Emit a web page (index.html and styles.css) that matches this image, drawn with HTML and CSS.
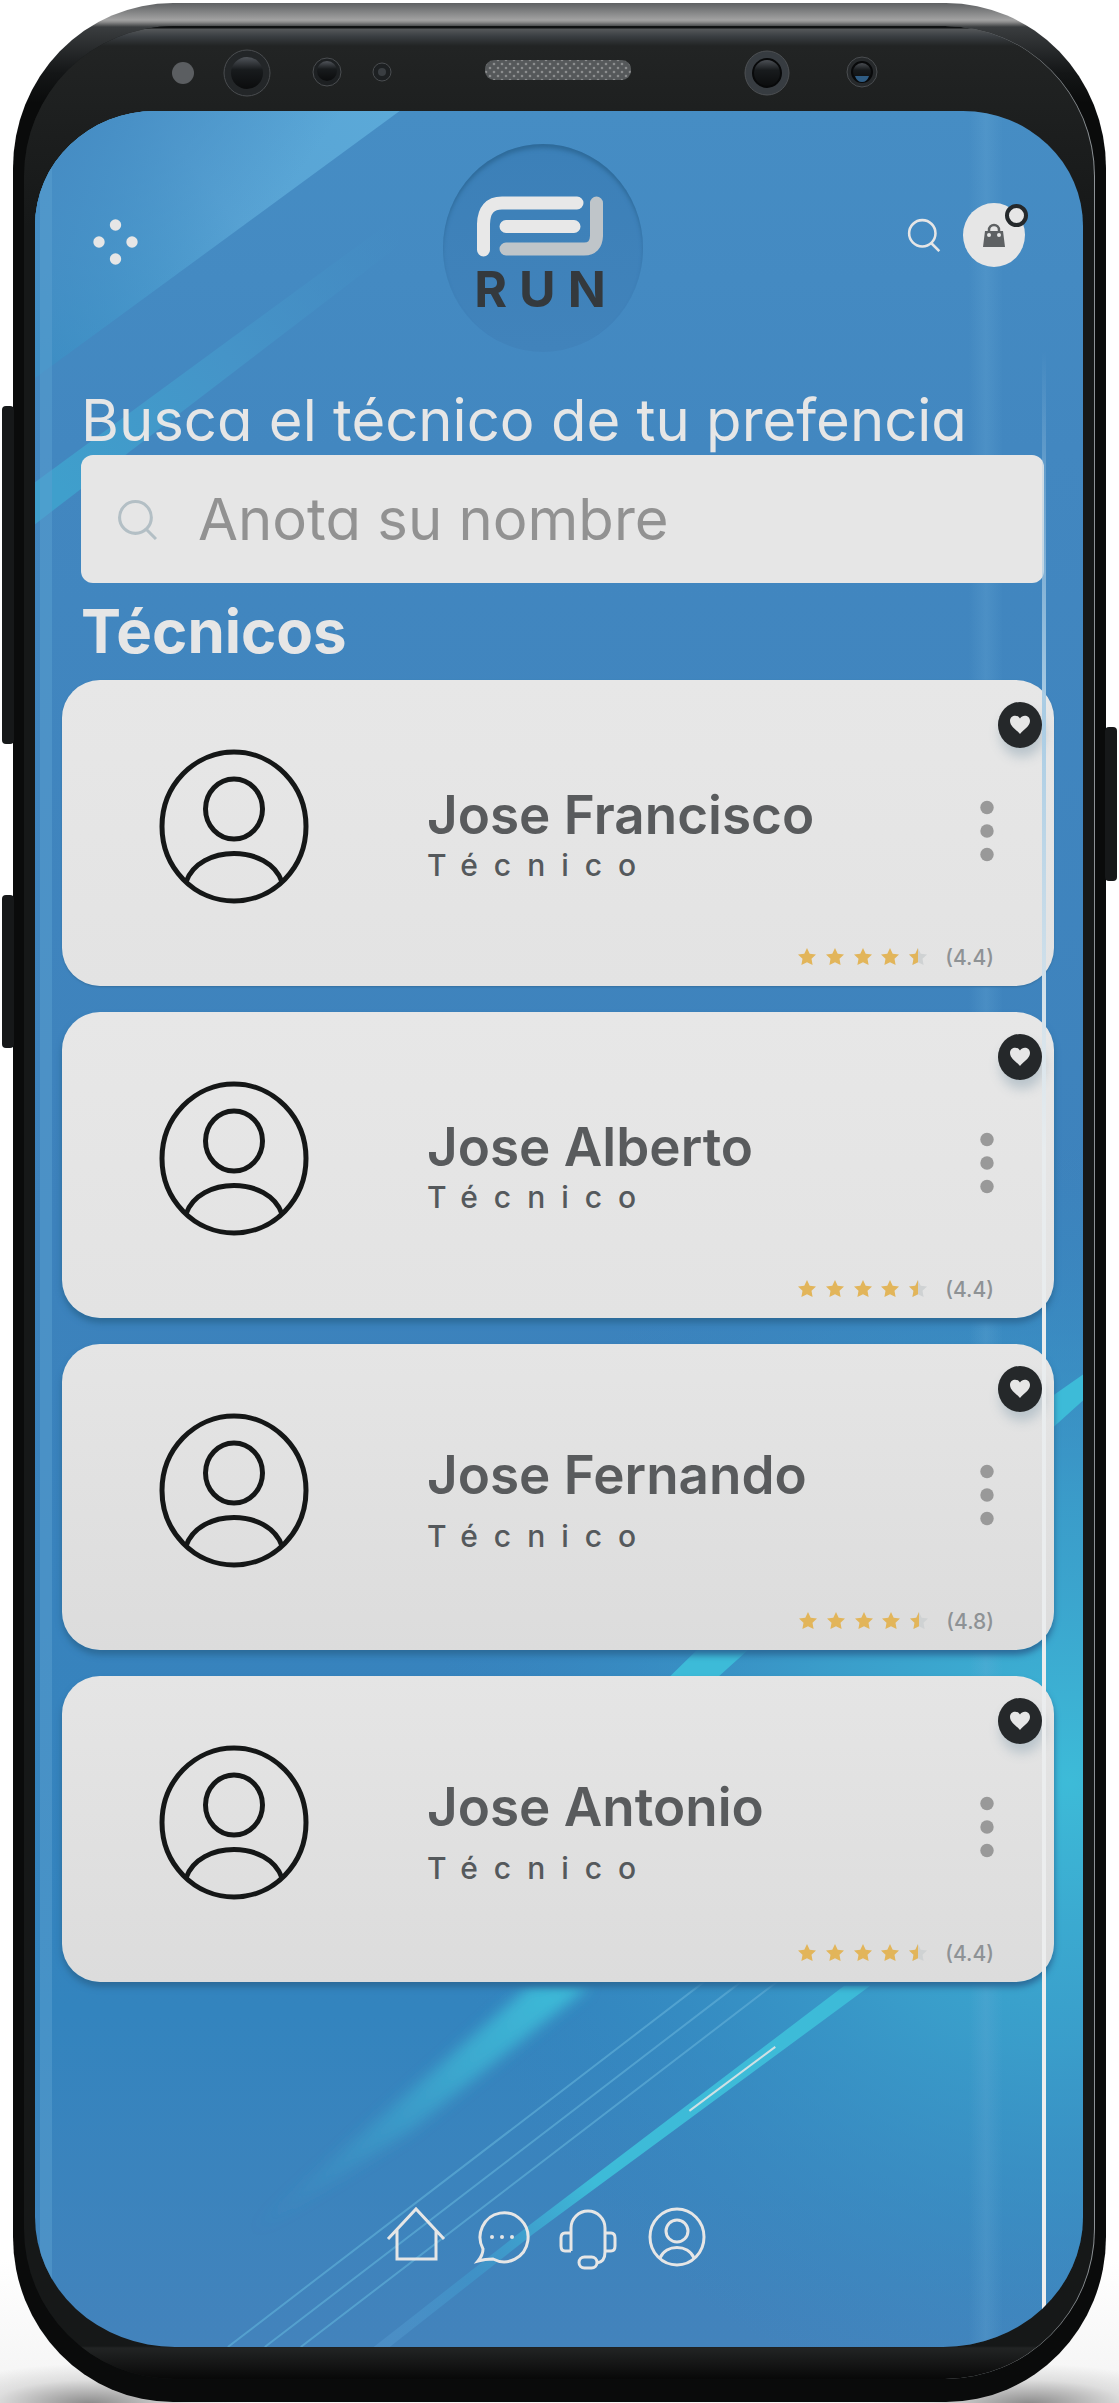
FILE: index.html
```html
<!DOCTYPE html>
<html lang="es">
<head>
<meta charset="utf-8">
<meta name="viewport" content="width=device-width, initial-scale=1">
<title>RUN - Técnicos</title>
<link rel="stylesheet" href="styles.css">
</head>
<body>
<svg class="sprite" aria-hidden="true">
  <symbol id="i-search" viewBox="0 0 40 40"><circle cx="18" cy="18" r="15.500"/><path d="M29 30l9 9"/></symbol>
  <symbol id="i-user" viewBox="0 0 150 155"><ellipse cx="75" cy="77.500" rx="72" ry="74.500"/><ellipse cx="75" cy="60" rx="28.500" ry="30"/><path d="M27 133C40 95 110 95 123 133"/></symbol>
  <symbol id="i-heart" viewBox="0 0 22 20"><path d="M11 19C8 15 1 11.500 1 6 1 0 8.500-1 11 3.500 13.500-1 21 0 21 6c0 5.500-7 9-10 13z"/></symbol>
  <symbol id="i-dots" viewBox="0 0 14 62"><circle cx="7" cy="7.500" r="6.700"/><circle cx="7" cy="31" r="6.700"/><circle cx="7" cy="54.500" r="6.700"/></symbol>
  <symbol id="i-star" viewBox="0 0 18 18"><path d="M9 0l2.700 5.700 6.300.8-4.500 4.300 1.100 6.200L9 14.200 3.400 17l1.100-6.200L0 6.500l6.300-.8z"/></symbol>
  <symbol id="i-rating" viewBox="0 0 130 18">
    <g fill="#e2b55a"><use href="#i-star" width="18" height="18"/><use href="#i-star" x="28" width="18" height="18"/><use href="#i-star" x="56" width="18" height="18"/><use href="#i-star" x="83" width="18" height="18"/></g>
    <use href="#i-star" x="111" width="18" height="18" fill="#cfd2d3"/>
    <path fill="#e2b55a" d="M120 0v14.200L114.400 17l1.100-6.200L111 6.500l6.300-.8z"/>
  </symbol>
</svg>

<div class="stage">
  <div class="device">
    <span class="key key--volume"></span>
    <span class="key key--assistant"></span>
    <span class="key key--power"></span>
    <div class="glass">
      <svg class="sensors" viewBox="0 0 720 60" aria-hidden="true">
        <defs>
          <pattern id="mesh" width="8" height="8" patternUnits="userSpaceOnUse"><rect width="8" height="8" fill="#55585a"/><circle cx="2" cy="2" r="1.300" fill="#8b8d8e"/><circle cx="6" cy="6" r="1.300" fill="#8b8d8e"/></pattern>
          <linearGradient id="lens" x2="0" y2="1"><stop offset="0" stop-color="#50545a"/><stop offset=".4" stop-color="#181b1d"/><stop offset="1" stop-color="#0b0c0d"/></linearGradient>
        </defs>
        <circle cx="23" cy="31" r="11" fill="#5b5e61"/>
        <circle cx="87" cy="31" r="23" fill="#232628" stroke="#4a4d50"/><circle cx="87" cy="31" r="16" fill="url(#lens)"/>
        <circle cx="167" cy="30" r="14" fill="#1d2022" stroke="#4a4d50"/><circle cx="167" cy="29" r="10" fill="url(#lens)"/>
        <circle cx="222" cy="30" r="9" fill="#1d2022" stroke="#4a4d50"/><circle cx="222" cy="30" r="4" fill="#3a3e42"/>
        <rect x="325" y="18" width="146" height="20" rx="9" fill="url(#mesh)"/>
        <circle cx="607" cy="31" r="22" fill="#373c41" stroke="#4d5053"/><circle cx="607" cy="31" r="14" fill="url(#lens)" stroke="#08090a" stroke-width="2"/>
        <circle cx="702" cy="30" r="15" fill="#26292b" stroke="#4a4d50"/><circle cx="702" cy="30" r="10" fill="url(#lens)" stroke="#08090a" stroke-width="2"/><path d="M695 34h14q-2 6-7 6t-7-6z" fill="#2f5c83"/>
      </svg>

      <div class="screen">
        <svg class="backdrop" viewBox="35 111 1049 2235" preserveAspectRatio="none" aria-hidden="true">
          <defs>
            <linearGradient id="base" x2="0" y2="1"><stop offset="0" stop-color="#468dc4"/><stop offset=".15" stop-color="#4287c0"/><stop offset=".5" stop-color="#3d82bc"/><stop offset=".85" stop-color="#3384be"/><stop offset="1" stop-color="#4383bc"/></linearGradient>
            <radialGradient id="glow" gradientUnits="userSpaceOnUse" cx="1070" cy="1780" r="640"><stop offset="0" stop-color="#3dbbd8"/><stop offset=".42" stop-color="#3ba3cd" stop-opacity=".8"/><stop offset="1" stop-color="#3589c2" stop-opacity="0"/></radialGradient>
            <linearGradient id="beam" gradientUnits="userSpaceOnUse" x1="390" y1="111" x2="60" y2="370"><stop offset="0" stop-color="#5ba9d8"/><stop offset=".45" stop-color="#58a3d4"/><stop offset="1" stop-color="#388fc4"/></linearGradient>
            <linearGradient id="beam-fade" gradientUnits="userSpaceOnUse" x1="90" y1="111" x2="260" y2="230"><stop offset="0" stop-color="#468dc4"/><stop offset="1" stop-color="#468dc4" stop-opacity="0"/></linearGradient>
            <linearGradient id="ray" gradientUnits="userSpaceOnUse" x1="400" y1="230" x2="60" y2="490"><stop offset="0" stop-color="#4592c6" stop-opacity="0"/><stop offset=".5" stop-color="#4594c8"/><stop offset="1" stop-color="#3f9fcc"/></linearGradient>
            <linearGradient id="wide" gradientUnits="userSpaceOnUse" x1="570" y1="1990" x2="250" y2="2230"><stop offset="0" stop-color="#3dbbd8"/><stop offset=".3" stop-color="#3db4d4" stop-opacity=".8"/><stop offset="1" stop-color="#3d9fcc" stop-opacity="0"/></linearGradient>
            <linearGradient id="thin" gradientUnits="userSpaceOnUse" x1="860" y1="1985" x2="380" y2="2346"><stop offset="0" stop-color="#3dbbd8"/><stop offset=".55" stop-color="#3dbbd8"/><stop offset=".8" stop-color="#3f97cb" stop-opacity=".7"/><stop offset="1" stop-color="#5598ce" stop-opacity=".5"/></linearGradient>
            <filter id="soft" x="-20%" y="-20%" width="140%" height="140%"><feGaussianBlur stdDeviation="7"/></filter>
          </defs>
          <path fill="url(#base)" d="M35 111h1049v2235H35z"/>
          <path fill="url(#glow)" d="M35 1120h1049v1226H35z"/>
          <path fill="url(#beam)" d="M35 111h365L35 378z"/>
          <path fill="url(#beam-fade)" d="M35 111h365L35 378z"/>
          <path fill="url(#ray)" d="M35 482L400 215v30L35 524z"/>
          <path fill="#3dbbd8" d="M1084 1374l-40 28v34l40-36zM707 1640h52l-50 45h-48z"/>
          <path fill="url(#wide)" filter="url(#soft)" d="M530 1985h60L410 2130 240 2240z"/>
          <g fill="none" stroke="#5ba9d4" stroke-width="2" opacity=".75"><path d="M706 1980L228 2346M743 1980L265 2346M779 1980L301 2346"/></g>
          <path fill="url(#thin)" d="M845 1985h26L690 2118 535 2232 390 2346h-16L530 2224z"/>
          <path stroke="#cfe0e4" stroke-width="2" d="M776 2046L690 2110"/>
        </svg>
        <span class="sheen sheen--left"></span>
        <span class="sheen sheen--soft"></span>

        <header class="topbar">
          <button class="icon-button topbar__menu" type="button" aria-label="Menú"><svg width="45" height="46" viewBox="0 0 45 46"><g fill="#e6e6e6"><circle cx="22.500" cy="6" r="5.700"/><circle cx="6" cy="23" r="5.700"/><circle cx="39" cy="23" r="5.700"/><circle cx="22.500" cy="40" r="5.700"/></g></svg></button>
          <div class="logo">
            <svg width="126" height="61" viewBox="0 0 126 61" aria-hidden="true"><g fill="none" stroke-width="13" stroke-linecap="round"><path stroke="#e8e8e8" d="M6.500 54V28Q7 7 25 7H100M29 30.500H97"/><path stroke="#bfc5c9" d="M119.500 7V40Q119 53 107 53H29"/></g></svg>
            <span class="logo__name">RUN</span>
          </div>
          <div class="topbar__actions">
            <button class="icon-button" type="button" aria-label="Buscar"><svg class="line-icon" width="34" height="34"><use href="#i-search"/></svg></button>
            <button class="icon-button bag" type="button" aria-label="Bolsa"><svg width="22" height="25" viewBox="0 0 22 25"><path fill="none" stroke="#5e6163" stroke-width="2.500" d="M6 12V7a5 5 0 0 1 10 0v5"/><path fill="#5e6163" d="M2 8h18l2 16H0z"/><circle cx="6" cy="12" r="2" fill="#e6e6e6"/><circle cx="16" cy="12" r="2" fill="#e6e6e6"/></svg><span class="bag__badge"></span></button>
          </div>
        </header>

        <main>
          <form class="search">
            <label class="search__label" for="name">Busca el técnico de tu prefencia</label>
            <div class="search__box">
              <svg class="search__icon" width="41" height="41"><use href="#i-search"/></svg>
              <input class="search__input" id="name" type="text" placeholder="Anota su nombre">
            </div>
          </form>

          <h1 class="heading">Técnicos</h1>

          <ul class="cards">
            <li class="card">
              <svg class="card__avatar"><use href="#i-user"/></svg>
              <div class="card__text"><h2 class="card__name">Jose Francisco</h2><p class="card__role">Técnico</p></div>
              <button class="icon-button card__more" type="button" aria-label="Más opciones"><svg width="14" height="62"><use href="#i-dots"/></svg></button>
              <p class="card__rating"><svg width="130" height="18"><use href="#i-rating"/></svg><span>(4.4)</span></p>
              <button class="icon-button card__favorite" type="button" aria-label="Favorito"><svg width="22" height="20"><use href="#i-heart"/></svg></button>
            </li>
            <li class="card card--raised">
              <svg class="card__avatar"><use href="#i-user"/></svg>
              <div class="card__text"><h2 class="card__name">Jose Alberto</h2><p class="card__role">Técnico</p></div>
              <button class="icon-button card__more" type="button" aria-label="Más opciones"><svg width="14" height="62"><use href="#i-dots"/></svg></button>
              <p class="card__rating"><svg width="130" height="18"><use href="#i-rating"/></svg><span>(4.4)</span></p>
              <button class="icon-button card__favorite" type="button" aria-label="Favorito"><svg width="22" height="20"><use href="#i-heart"/></svg></button>
            </li>
            <li class="card card--raised card--roomy">
              <svg class="card__avatar"><use href="#i-user"/></svg>
              <div class="card__text"><h2 class="card__name">Jose Fernando</h2><p class="card__role">Técnico</p></div>
              <button class="icon-button card__more" type="button" aria-label="Más opciones"><svg width="14" height="62"><use href="#i-dots"/></svg></button>
              <p class="card__rating"><svg width="130" height="18"><use href="#i-rating"/></svg><span>(4.8)</span></p>
              <button class="icon-button card__favorite" type="button" aria-label="Favorito"><svg width="22" height="20"><use href="#i-heart"/></svg></button>
            </li>
            <li class="card card--raised card--roomy">
              <svg class="card__avatar"><use href="#i-user"/></svg>
              <div class="card__text"><h2 class="card__name">Jose Antonio</h2><p class="card__role">Técnico</p></div>
              <button class="icon-button card__more" type="button" aria-label="Más opciones"><svg width="14" height="62"><use href="#i-dots"/></svg></button>
              <p class="card__rating"><svg width="130" height="18"><use href="#i-rating"/></svg><span>(4.4)</span></p>
              <button class="icon-button card__favorite" type="button" aria-label="Favorito"><svg width="22" height="20"><use href="#i-heart"/></svg></button>
            </li>
          </ul>
        </main>

        <nav class="tabs">
          <a class="tabs__link" href="#inicio" aria-label="Inicio"><svg class="line-icon" width="60" height="60" viewBox="0 0 60 60"><path d="M2 33L30 3l28 30M11 24v29h39V24"/></svg></a>
          <a class="tabs__link" href="#mensajes" aria-label="Mensajes"><svg class="line-icon" width="60" height="60" viewBox="0 0 60 60"><path d="M10 43A24 24.500 0 1 1 20 53Q12 53 5 55 10 49 10 43z"/><g class="solid"><circle cx="19" cy="31" r="2"/><circle cx="29" cy="31" r="2"/><circle cx="39" cy="31" r="2"/></g></svg></a>
          <a class="tabs__link" href="#soporte" aria-label="Soporte"><svg class="line-icon" width="60" height="60" viewBox="0 0 60 60"><path d="M11 45V22a17 17 0 0 1 34 0v24q0 10-8 11M11 27H5q-4 0-4 5v8q0 5 4 5h6M45 27h6q4 0 4 5v8q0 5-4 5h-6"/><rect x="19" y="51" width="18" height="11" rx="5.500"/></svg></a>
          <a class="tabs__link" href="#perfil" aria-label="Perfil"><svg class="line-icon" width="60" height="60" viewBox="0 0 60 60"><ellipse cx="30" cy="31" rx="27" ry="28"/><circle cx="30" cy="25" r="11"/><path d="M13 52c6-14 28-14 34 0"/></svg></a>
        </nav>

        <span class="sheen sheen--bright"></span>
      </div>
    </div>
  </div>
</div>
</body>
</html>
```
FILE: styles.css
```css
* { box-sizing: border-box; }

body {
  margin: 0;
  background: #fff;
  font-family: Inter, "Open Sans", sans-serif;
  color: #e6e6e6;
}

h1, h2, p, ul { margin: 0; padding: 0; }

.sprite { display: block; width: 0; height: 0; }

.icon-button {
  display: flex;
  align-items: center;
  justify-content: center;
  padding: 0;
  border: 0;
  background: none;
  color: inherit;
}

.line-icon {
  overflow: visible;
  fill: none;
  stroke: #e6e6e6;
  stroke-width: 3;
}

.solid { fill: #e6e6e6; stroke: none; }

/* Phone body */
.stage {
  padding: 3px 13px 2px;
  background:
    radial-gradient(ellipse 160px 40px at 8% 100%, #8a8a8a, #dedede 60%, transparent),
    radial-gradient(ellipse 160px 40px at 92% 100%, #8a8a8a, #dedede 60%, transparent),
    linear-gradient(#fff 94%, #f3f3f3);
}

.device {
  position: relative;
  padding: 23px 11px;
  border-radius: 160px / 165px;
  background:
    linear-gradient(#5f6163, #a2a2a2 17px, #8e8e8e 19px, #3a3d3f 24px, #141617 70px, transparent 100px),
    #0a0b0b;
}

.glass {
  padding: 2px 11px 32px;
  border-radius: 150px / 150px;
  border-right: 1px solid #8d9296;
  background:
    linear-gradient(#101213 2px, #55585a 3px, #3b3f43 10px, #222424 20px, transparent 200px),
    linear-gradient(transparent calc(100% - 33px), #222424 calc(100% - 31px), #080808),
    #161818;
}

.key {
  position: absolute;
  width: 12px;
  border-radius: 4px;
  background: #161819;
}

.key--volume { top: 403px; left: -11px; height: 338px; }
.key--assistant { top: 892px; left: -11px; height: 153px; }
.key--power { top: 724px; right: -11px; height: 154px; }

.sensors {
  display: block;
  width: 720px;
  max-width: 100%;
  height: 60px;
  margin: 14px auto 9px 125px;
}

/* Screen */
.screen {
  position: relative;
  overflow: hidden;
  padding: 33px 29px 81px 27px;
  border-radius: 120px 120px 140px 140px / 115px 115px 130px 130px;
}

.backdrop {
  position: absolute;
  inset: 0;
  width: 100%;
  height: 100%;
}

.topbar, main, .tabs { position: relative; }

.topbar {
  display: grid;
  grid-template-columns: 1fr auto 1fr;
  padding: 0 29px 0 31px;
  margin-bottom: 33px;
}

.topbar__menu {
  align-self: start;
  justify-self: start;
  margin-top: 75px;
}

.logo {
  display: flex;
  flex-direction: column;
  align-items: center;
  width: 200px;
  height: 208px;
  padding: 52px 6px 0 0;
  margin-right: 32px;
  border-radius: 50%;
  background: linear-gradient(#3c80b8, #4183bb);
  box-shadow: inset 0 5px 4px -1px #2e6a99;
}

.logo__name {
  padding-left: 12px;
  margin-top: 6px;
  color: #34393d;
  font-size: 50px;
  font-weight: 700;
  line-height: 52px;
  letter-spacing: 12px;
}

.topbar__actions {
  display: flex;
  align-items: center;
  align-self: start;
  justify-self: end;
  gap: 22px;
  margin-top: 59px;
}

.bag {
  position: relative;
  width: 62px;
  height: 64px;
  border-radius: 50%;
  background: #e6e6e6;
}

.bag__badge {
  position: absolute;
  top: 1px;
  right: -3px;
  width: 23px;
  height: 23px;
  border: 4px solid #25292c;
  border-radius: 50%;
  background: #e6e6e6;
}

/* Search */
.search { padding: 0 10px 0 19px; }

.search__label {
  display: block;
  font-size: 58px;
  line-height: 70px;
  white-space: nowrap;
  font-feature-settings: "cv11";
}

.search__box {
  display: flex;
  align-items: center;
  gap: 40px;
  height: 128px;
  padding: 0 36px;
  border-radius: 12px;
  background: #e6e6e6;
}

.search__icon {
  fill: none;
  stroke: #b3bfc5;
  stroke-width: 3;
}

.search__input {
  flex: 1;
  min-width: 0;
  padding: 0;
  border: 0;
  background: none;
  color: #555;
  font: inherit;
  font-size: 58px;
  font-feature-settings: "cv11";
}

.search__input::placeholder { color: #929292; opacity: 1; }

.heading {
  padding-left: 19px;
  font-size: 60px;
  font-weight: 700;
  line-height: 97px;
}

/* Technician cards */
.cards {
  display: grid;
  gap: 26px;
  list-style: none;
}

.card {
  position: relative;
  display: grid;
  grid-template-columns: 150px 1fr auto;
  grid-template-rows: 1fr 58px;
  column-gap: 118px;
  min-height: 306px;
  padding: 69px 60px 0 97px;
  border-radius: 38px;
  background: linear-gradient(#e7e7e7, #e3e3e3);
  box-shadow: 0 1px 2px #35709f;
}

.card--raised { box-shadow: 0 5px 6px #2c6b99; }
.card--roomy { background: linear-gradient(#e5e5e5, #dcdcdc); }

.card__avatar {
  width: 150px;
  height: 155px;
  fill: none;
  stroke: #151717;
  stroke-width: 5;
}

.card__text {
  display: flex;
  flex-direction: column;
  gap: 4px;
  padding-top: 38px;
}

.card--roomy .card__text {
  gap: 15px;
  padding-top: 34px;
}

.card__name {
  color: #595b5d;
  font-size: 53px;
  font-weight: 600;
  line-height: 56px;
  white-space: nowrap;
}

.card__role {
  color: #55595c;
  font-size: 30px;
  font-weight: 500;
  line-height: 36px;
  letter-spacing: 16px;
}

.card__more {
  align-self: start;
  padding-top: 51px;
  fill: #999;
}

.card__rating {
  grid-column: 1 / -1;
  display: flex;
  align-items: center;
  justify-content: flex-end;
  gap: 17px;
  color: #8e9295;
  font-size: 21px;
  font-weight: 500;
}

.card__favorite {
  position: absolute;
  top: 22px;
  right: 12px;
  width: 44px;
  height: 46px;
  border-radius: 50%;
  background: #25282a;
  box-shadow: 2px 9px 12px #b9c4cb;
  fill: #e6e6e6;
}

/* Bottom navigation */
.tabs {
  display: flex;
  justify-content: center;
  gap: 27px;
  padding-right: 23px;
  margin-top: 224px;
}

.tabs__link { display: block; height: 60px; }

/* Reflections along the curved edges of the glass */
.sheen { position: absolute; pointer-events: none; }

.sheen--left {
  top: 0;
  bottom: 0;
  left: 5px;
  width: 12px;
  background: #5aa0d0;
  opacity: .5;
}

.sheen--soft {
  top: 0;
  bottom: 0;
  right: 80px;
  width: 34px;
  background: linear-gradient(90deg, transparent, #6cadd8, transparent);
  opacity: .25;
}

.sheen--bright {
  top: 240px;
  bottom: 0;
  right: 37px;
  width: 4px;
  background: linear-gradient(transparent, #a9cce4 18%, #e8ecee 40%, #eee);
}
```
